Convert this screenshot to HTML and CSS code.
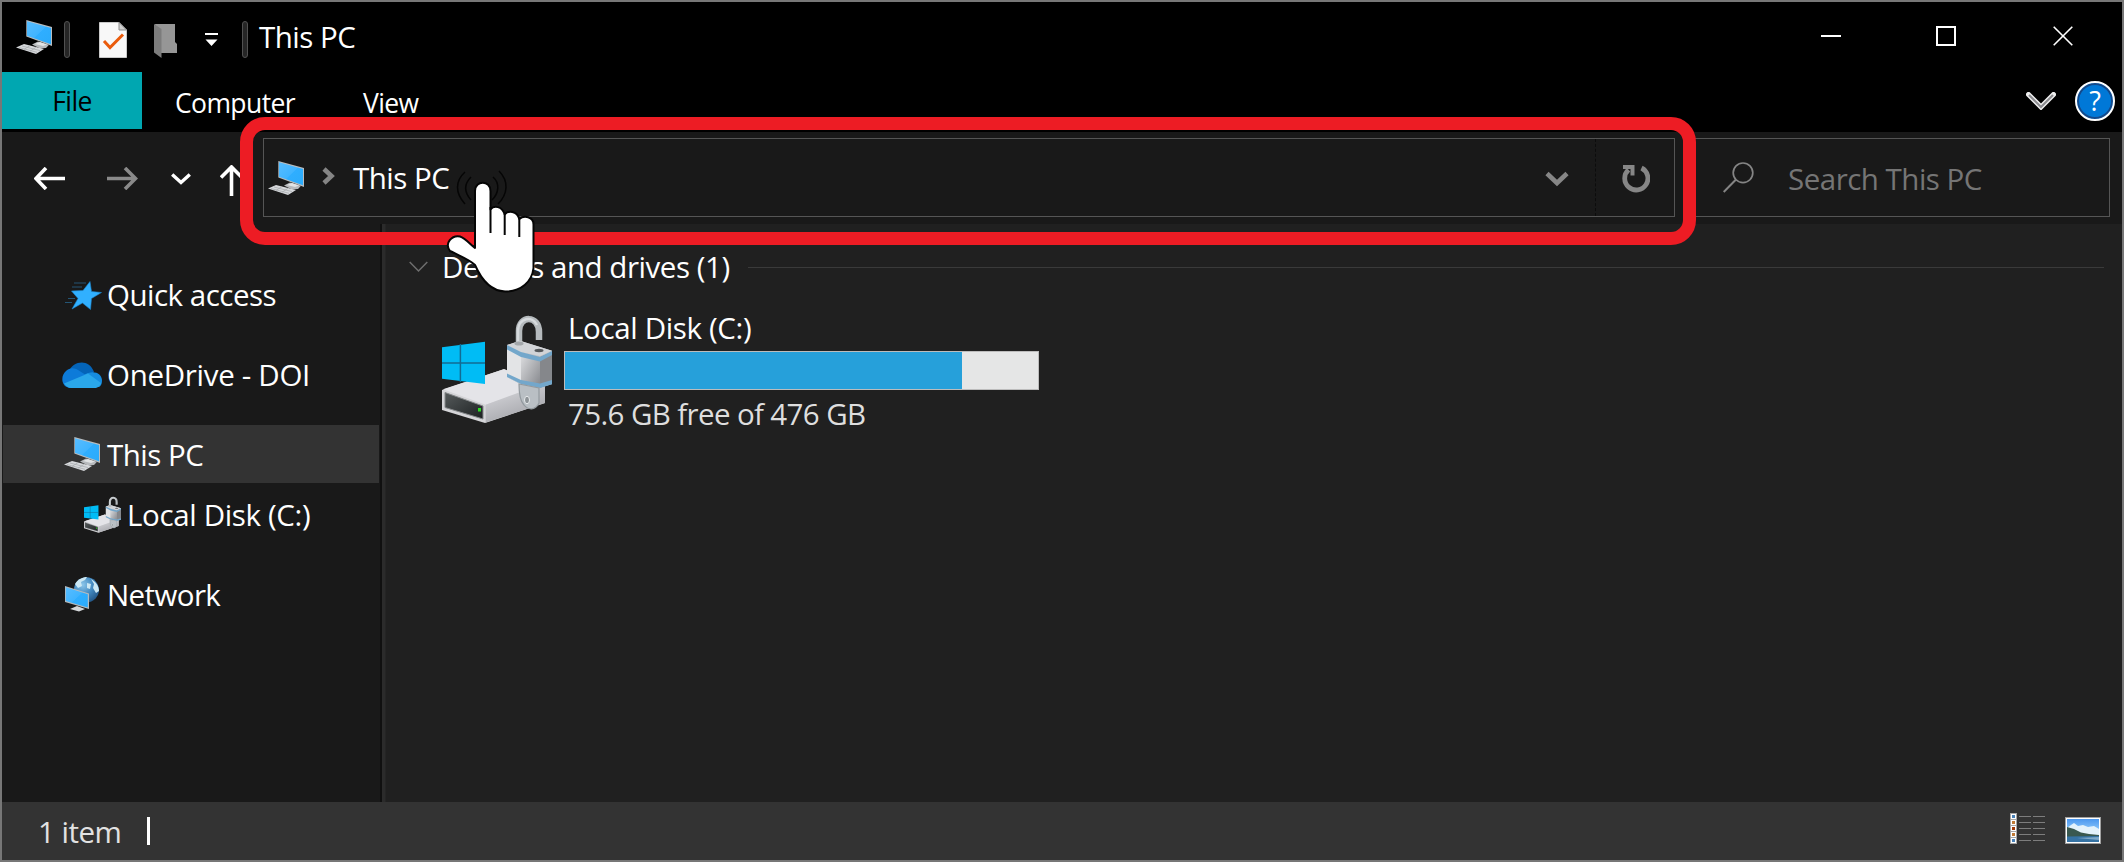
FILE: index.html
```html
<!DOCTYPE html>
<html lang="en">
<head>
<meta charset="utf-8">
<title>This PC</title>
<link rel="stylesheet" href="styles.css">
</head>
<body>
<svg class="defs" aria-hidden="true">
  <defs>
    <linearGradient id="screen" x1="0" y1="0" x2="1" y2="1"><stop offset="0" stop-color="#58bdff"/><stop offset=".5" stop-color="#40b4ff"/><stop offset=".52" stop-color="#2faeff"/><stop offset="1" stop-color="#2babfb"/></linearGradient>
    <linearGradient id="side" x1="0" y1="0" x2=".5" y2="1"><stop offset="0" stop-color="#e0e0e4"/><stop offset="1" stop-color="#a4a5aa"/></linearGradient>
    <linearGradient id="metal" x1="0" y1="0" x2="1" y2="1"><stop offset="0" stop-color="#dfe0e2"/><stop offset="1" stop-color="#85878c"/></linearGradient>
    <linearGradient id="bay" x1="0" y1="0" x2="1" y2="1"><stop offset="0" stop-color="#555a5b"/><stop offset="1" stop-color="#1d2122"/></linearGradient>
    <linearGradient id="sky" x1="0" y1="0" x2="0" y2="1"><stop offset="0" stop-color="#4b97ef"/><stop offset=".5" stop-color="#8dc8fb"/></linearGradient>
    <radialGradient id="globe" cx=".35" cy=".3" r=".8"><stop offset="0" stop-color="#8cc6ea"/><stop offset=".5" stop-color="#4389c0"/><stop offset="1" stop-color="#1d4f7e"/></radialGradient>
    <symbol id="pc" viewBox="0 0 36 34">
      <path d="M10.3 0 36 7v19L10.3 16.500z" fill="#b9bcbe"/>
      <path d="M11 1.300 35 7.900v16.400L11 15.700z" fill="url(#screen)"/>
      <path d="M16 24.500 22 21.500 33 24.800 30 28 24 28.500z" fill="#b7babd"/>
      <path d="M19 24 24 22 31 24.500 27 26z" fill="#e2e4e5"/>
      <path d="M0 27.500 8 24 28 29 20 34z" fill="#d7d9dc"/>
      <path d="M3 27.500 21 32.300M6 26 24 30.600M8 29.500l6-4M14 31.300l6-4" stroke="#a4a7aa" stroke-width=".7" fill="none"/>
    </symbol>
    <symbol id="drive" viewBox="0 0 110 108">
      <path d="M0 75 62 54 103 71v17L43 108 0 95z" fill="#d5d5d8"/>
      <path d="M1 74.300 62 54.300 103 71 43.700 89.700z" fill="#e4e4e8"/>
      <path d="M43.700 89.700 103 68v20L43.700 107.600z" fill="url(#side)"/>
      <path d="M3 77.500 41 91v13L3 92.500z" fill="url(#bay)" stroke="#85888a"/>
      <path d="M36 93h3v3.500h-3z" fill="#2bdc22"/>
      <path d="M0 32.300 43 26.700V69L0 63.700z" fill="#00bcf5"/>
      <path d="M18.400 29v38M0 48h43" stroke="#126b93" stroke-width="1.500"/>
      <path d="M77 30V16C77 0 97 0 97 17v8" fill="none" stroke="#b5babd" stroke-width="6.500"/>
      <path d="M76 28V15C77 3 90 0 95 10" fill="none" stroke="#d6dadd" stroke-width="2.500"/>
      <path d="M65 30 78 25.700 110 35.700V69L98 72.700 78 69 65 62z" fill="#c0c2c5"/>
      <path d="M65 30 78 25.700 110 35.700 98 41 79 37z" fill="#d2d4d7"/>
      <path d="M65 30 79 37v32L65 62z" fill="#e3e4e6"/>
      <path d="M79 37 98 42v30L79 69z" fill="url(#metal)"/>
      <path d="M98 42l12-5v32l-12 3.700z" fill="#85878b"/>
      <path d="M65 30 79 37 98 42 110 36v4L98 46.500 79 42 65 34.500zM65 58.500 79 65 98 68.500 110 65v4.300l-12 3.700-19-4-14-7z" fill="#73a7cb"/>
      <ellipse cx="97" cy="35.500" rx="4.500" ry="1.700" fill="#55585b"/>
      <ellipse cx="77" cy="28.500" rx="4.500" ry="2" fill="#a3a7aa"/>
      <path d="M77 69 97 73v15c-4 8-11 7-15 2-4-4-5-10-5-21z" fill="#b9bfc4" stroke="#92999e" stroke-width="1.200"/>
      <ellipse cx="85" cy="85" rx="2.500" ry="3.700" fill="#8e9498" stroke="#e7eaec"/>
    </symbol>
  </defs>
</svg>

<div class="window">
  <header class="titlebar">
    <svg class="title-pc" width="36" height="34"><use href="#pc"/></svg>
    <span class="grip"></span>
    <svg class="doc" width="28" height="36" viewBox="0 0 28 36">
      <path d="M.5.500H20l7.500 7.500v27.500H.5z" fill="#f8f8f8" stroke="#c9c9c9"/>
      <path d="M20 .500v7.500h7.500z" fill="#d0d0d0" stroke="#8d8d8d"/>
      <path d="M5 19 11 25.500 24 12.500" fill="none" stroke="#ea5b0c" stroke-width="3"/>
    </svg>
    <svg class="folder" width="24" height="34" viewBox="0 0 24 34">
      <path d="M1 0h20v18l2 2v9H6z" fill="#969696"/><path d="M0 0 7.500 5v29L0 28.500z" fill="#7c7c7c"/>
    </svg>
    <svg class="customize" width="13" height="14" viewBox="0 0 13 14"><path d="M0 0h13v2H0zM.5 6.500h12L6.500 13z" fill="#fff"/></svg>
    <span class="grip"></span>
    <h1 class="title">This PC</h1>
    <div class="controls">
      <svg width="20" height="20" viewBox="0 0 20 20"><path d="M0 10h20" stroke="#fff" stroke-width="2"/></svg>
      <svg width="20" height="20" viewBox="0 0 20 20"><path d="M1 1h18v18H1z" fill="none" stroke="#fff" stroke-width="2"/></svg>
      <svg width="20" height="20" viewBox="0 0 20 20"><path d="M.7.700 19.300 19.300M19.300.700.7 19.300" stroke="#fff" stroke-width="1.600"/></svg>
    </div>
  </header>

  <nav class="ribbon">
    <span class="tab tab-file">File</span>
    <span class="tab tab-computer">Computer</span>
    <span class="tab tab-view">View</span>
    <svg class="expand" width="30" height="18" viewBox="0 0 30 18"><path d="M2.500 2.500 15 15 27.500 2.500" fill="none" stroke="#f0f0f0" stroke-width="5" stroke-linecap="round"/><path d="M3 3 15 15 27 3" fill="none" stroke="#8c8c90" stroke-width="2.200"/></svg>
    <span class="help">?</span>
  </nav>

  <div class="toolbar">
    <svg class="back" width="31" height="23" viewBox="0 0 31 23"><path d="M31 11.500H2M12 1 2 11.500 12 22" fill="none" stroke="#fff" stroke-width="3.600"/></svg>
    <svg class="forward" width="31" height="23" viewBox="0 0 31 23"><path d="M0 11.500H29M18 1 28.500 11.500 18 22" fill="none" stroke="#8a8a8a" stroke-width="3.600"/></svg>
    <svg class="recent" width="20" height="12" viewBox="0 0 20 12"><path d="M1.200 1.500 10 9.500 18.800 1.500" fill="none" stroke="#fff" stroke-width="3.400"/></svg>
    <svg class="up" width="23" height="31" viewBox="0 0 23 31"><path d="M11.500 31V2M1 12.500 11.500 2 22 12.500" fill="none" stroke="#fff" stroke-width="3.600"/></svg>
    <div class="address">
      <svg class="address-pc" width="36" height="34"><use href="#pc"/></svg>
      <svg class="crumb" width="13" height="18" viewBox="0 0 13 18"><path d="M2 2 9.500 9 2 16" fill="none" stroke="#858585" stroke-width="4.600"/></svg>
      <span class="path">This PC</span>
      <svg class="drop" width="24" height="16" viewBox="0 0 24 16"><path d="M2 2.500 12 12 22 2.500" fill="none" stroke="#868686" stroke-width="4.600"/></svg>
      <span class="divider"></span>
      <svg class="refresh" width="28" height="29" viewBox="0 0 28 29"><path d="M6.500 5.800A11.600 11.600 0 1 0 19.500 4" fill="none" stroke="#868686" stroke-width="4.800"/><path d="M1 1h11.500v10.500h-4V5H1z" fill="#868686"/></svg>
    </div>
    <div class="search">
      <svg class="lens" width="31" height="31" viewBox="0 0 31 31"><path d="M.7 30 13 17.500" stroke="#858585" stroke-width="2"/><circle cx="20" cy="10.800" r="9.800" fill="none" stroke="#858585" stroke-width="1.700"/></svg>
      <span class="hint">Search This PC</span>
    </div>
  </div>

  <div class="main">
    <aside class="sidebar">
      <div class="item quick">
        <svg width="37" height="29" viewBox="0 0 37 29"><path d="M9 2h12M7 6h10M3 17.500h7M0 21.500h7" stroke="#245574" stroke-width="1"/><path d="M25 .500 26.500 10.500 36.500 11.500 26.500 17.500 25.500 28.500 17.500 22 7 28 13 17.500 6.500 10 18 9.500z" fill="#31b0ff" stroke="#1d86cf" stroke-width=".6"/></svg>
        <span>Quick access</span>
      </div>
      <div class="item onedrive">
        <svg width="40" height="26" viewBox="0 0 40 26"><path d="M7 9C11-1 27-4 32 10L22 18z" fill="#0464b8"/><path d="M9.500 26C-1 26-2 14 4 9c4-4 9-3 12-1l11 7-12 11z" fill="#0d7bd9"/><path d="M22 13c8-5 18-3 18 6 0 2-1 5-3 6L25 22z" fill="#168cdf"/><path d="M2 21.500 26 11.500 39 21c-1 3-3 5-7 5H9.500c-3 0-6-2-7.500-4.500z" fill="#2aa7ea"/></svg>
        <span>OneDrive - DOI</span>
      </div>
      <div class="item this-pc">
        <svg width="36" height="34"><use href="#pc"/></svg>
        <span>This PC</span>
      </div>
      <div class="item disk">
        <svg width="37" height="37"><use href="#drive"/></svg>
        <span>Local Disk (C:)</span>
      </div>
      <div class="item network">
        <svg width="34" height="35" viewBox="0 0 34 35"><circle cx="21.500" cy="12.800" r="12.600" fill="url(#globe)"/><path d="M10 7c3-5 8-7 12-7l-2 3-4 2 1 4-4 2zM26 2c5 3 8 7 8 12l-3 2-3-5 1-4zM22 6l4 1-1 5-3-1z" fill="#cce8f4"/><path d="M0 9 24 16.500V32L0 25z" fill="#b6babd"/><path d="M.8 10.300 22.800 17.200v13.300L.8 24z" fill="url(#screen)"/><path d="M5 32 12 29 20 32 14 34.500z" fill="#d5d8da"/></svg>
        <span>Network</span>
      </div>
    </aside>
    <div class="splitter"></div>
    <section class="content">
      <div class="group">
        <svg width="19" height="12" viewBox="0 0 19 12"><path d="M.7 1 9.500 10 18.300 1" fill="none" stroke="#6e6e6e" stroke-width="1.500"/></svg>
        <span class="group-name">Devices and drives (1)</span>
        <span class="rule"></span>
      </div>
      <div class="volume">
        <svg width="110" height="108"><use href="#drive"/></svg>
        <div class="details">
          <span class="volume-name">Local Disk (C:)</span>
          <div class="meter"><div class="used" style="width:84%"></div></div>
          <span class="free">75.6 GB free of 476 GB</span>
        </div>
      </div>
    </section>
  </div>

  <footer class="status">
    <span class="count">1 item</span>
    <span class="caret"></span>
    <svg class="view-details" width="36" height="31" viewBox="0 0 36 31">
      <path d="M0 0h7v31H0z" fill="#a6a6a6"/>
      <path d="M1 1h5v5H1zM1 7h5v5H1zM1 13h5v5H1zM1 19h5v5H1zM1 25h5v5H1z" fill="#fff"/>
      <path d="M2 2h3v3H2zM2 26h3v3H2z" fill="#4a82b8"/><path d="M2 8h3v3H2zM2 20h3v3H2z" fill="#c07a35"/><path d="M2 14h3v3H2z" fill="#a33a08"/>
      <path d="M9 3.500h12M23 3.500h12M9 9.500h12M23 9.500h12M9 15.500h12M23 15.500h12M9 21.500h12M23 21.500h12M9 27.500h12M23 27.500h12" stroke="#7d7d7d"/>
    </svg>
    <svg class="view-large" width="36" height="27" viewBox="0 0 36 27">
      <path d="M0 0h36v27H0z" fill="#a0a0a0"/><path d="M1 1h34v25H1z" fill="#fff"/><path d="M2 2h32v23H2z" fill="url(#sky)"/>
      <path d="M2 11 6 8 9 6 13 9 18 8 23 10 29 9 34 12v7H2z" fill="#e4f2fb"/>
      <path d="M2 10 9 12 16 15.500 24 17 34 18V20H2z" fill="#39584f"/><path d="M2 19.500 34 19v6H2z" fill="#3673a4"/><path d="M12 21 34 20v3z" fill="#80aac9"/>
    </svg>
  </footer>
</div>

<div class="highlight"></div>
<svg class="pointer" width="90" height="126" viewBox="0 0 90 126">
  <path d="M19 3C9 12 9 24 19 35M25 8C18 15 18 23 25 31M53 2C63 12 62 25 52 35M47 8C54 14 53 24 46 31" fill="none" stroke="#050505" stroke-width="1.500"/>
  <path d="M29 79V22C29 11 44.500 11 44.500 22V40.500C48 36 56 37 58.700 45.500C62 41 71 42 73.300 50C78 46 87.500 47.500 87.500 55.500V99C86 113 75 122.500 59 122.500C46 122 36 112 29 96C24 91 12 86 4 82C-2 74 6 66 14 67.500C19 69 24 75 29 79Z" fill="#fff" stroke="#050505" stroke-width="2" stroke-linejoin="round"/>
  <path d="M44.500 38V64M58.700 45V66M73.300 49V68" fill="none" stroke="#050505" stroke-width="2"/>
</svg>
</body>
</html>
```

FILE: styles.css
```css
* { box-sizing: border-box; }
body {
  margin: 0;
  width: 2124px;
  height: 862px;
  overflow: hidden;
  position: relative;
  background: #191919;
  color: #fff;
  font-family: "Open Sans", "Noto Sans", sans-serif;
  font-size: 29.5px;
  line-height: 40px;
  white-space: nowrap;
}
svg { display: block; flex: none; }
.defs { position: absolute; width: 0; height: 0; }
.window {
  width: 2124px;
  height: 862px;
  border: 2px solid #777;
  display: flex;
  flex-direction: column;
}

.titlebar { height: 70px; background: #000; display: flex; align-items: flex-start; padding: 18px 49px 0 14px; }
.grip { width: 6px; height: 37px; margin: 1px 0 0 12px; border: 1px solid #515151; border-radius: 3px; background: #262626; flex: none; }
.doc { margin: 2px 0 0 29px; }
.folder { margin: 4px 0 0 27px; }
.customize { margin: 13px 0 0 27px; }
.customize + .grip { margin-left: 24px; }
.title { margin: -3px 0 0 11px; font-size: 29.5px; font-weight: 400; letter-spacing: -.5px; }
.controls { margin: 6px 0 0 auto; display: flex; gap: 95px; }
.controls svg:last-child { margin-left: 2px; }

.ribbon { height: 60px; background: #000; display: flex; align-items: flex-start; font-size: 26.5px; letter-spacing: -.6px; padding-right: 7px; }
.tab { line-height: 59px; height: 57px; }
.tab-file { width: 140px; text-align: center; background: #00a7b1; color: #000; }
.tab-computer { margin-left: 33px; line-height: 62px; }
.tab-view { margin-left: 68px; line-height: 62px; }
.expand { margin: 20px 0 0 auto; }
.help {
  margin: 9px 0 0 19px;
  width: 40px;
  height: 40px;
  border-radius: 50%;
  border: 2px solid #fff;
  background: #0078d7;
  box-shadow: inset 0 0 0 2px #14498a;
  text-align: center;
  line-height: 36px;
  font-size: 27px;
  letter-spacing: 0;
}

.toolbar { height: 92px; background: #191919; display: flex; align-items: flex-start; }
.back { margin: 35px 0 0 32px; }
.forward { margin: 35px 0 0 42px; }
.recent { margin: 41px 0 0 33px; }
.up { margin: 33px 0 0 29px; }
.address, .search { height: 79px; margin-top: 6px; border: 1px solid #555; display: flex; align-items: flex-start; }
.address { width: 1412px; margin-left: 20px; }
.address-pc { margin: 22px 0 0 4px; }
.crumb { margin: 28px 0 0 18px; }
.path { margin: 19px 0 0 18px; letter-spacing: -.5px; }
.drop { margin: 32px 0 0 auto; }
.divider { margin-left: 26px; width: 1px; height: 77px; border-left: 1px dashed #0c0c0c; }
.refresh { margin: 25px 24px 0 26px; }
.search { width: 423px; margin-left: 12px; color: #757575; }
.lens { margin: 23px 0 0 35px; }
.hint { margin: 20px 0 0 34px; letter-spacing: -.5px; }

.main { height: 578px; display: flex; }
.sidebar { width: 378px; padding: 42px 1px 0; background: #191919; display: flex; flex-direction: column; }
.item { height: 58px; margin-bottom: 22px; display: flex; align-items: center; letter-spacing: -.5px; }
.item svg { margin-left: 61px; margin-right: 7px; }
.item.quick svg { margin-left: 62px; margin-right: 5px; }
.item.onedrive svg { margin-left: 59px; margin-right: 5px; }
.item.onedrive { margin-bottom: 21px; letter-spacing: -.3px; }
.item.this-pc { background: #333; margin-bottom: 2px; }
.item.this-pc span, .item.disk span, .item.network span { padding-top: 2px; }
.item.disk { letter-spacing: -.35px; }
.item.disk svg { margin-left: 81px; margin-right: 6px; }
.item.network { letter-spacing: -.6px; }
.item.network svg { margin-left: 62px; margin-right: 8px; }
.splitter { width: 6px; background: #2b2b2b; border-left: 2px solid #101010; border-right: 1px solid #252525; }
.content { flex: 1; background: #202020; padding: 23px 18px 0 23px; }
.group { display: flex; align-items: center; height: 40px; }
.group-name { margin-left: 14px; letter-spacing: -.45px; }
.rule { flex: 1; height: 1px; margin-left: 18px; background: #3a3a3a; }
.volume { display: flex; margin: 28px 0 0 33px; }
.details { margin-left: 12px; width: 475px; display: flex; flex-direction: column; }
.volume-name, .free { margin-left: 4px; letter-spacing: -.35px; }
.volume-name { margin-top: -7px; }
.meter { height: 39px; margin-top: 3px; border: 1px solid #bcbcbc; background: #e5e6e6; }
.used { height: 100%; background: #26a0da; }
.free { margin-top: 4px; color: #dedede; letter-spacing: -.62px; }

.status { height: 58px; background: #333; display: flex; align-items: flex-start; padding: 0 21px 0 36px; }
.count { color: #e2e2e2; margin-top: 10px; letter-spacing: -.5px; }
.caret { margin: 15px 0 0 26px; width: 3px; height: 28px; background: #fff; }
.view-details { margin: 11px 0 0 auto; }
.view-large { margin: 15px 0 0 19px; }

/* Callout overlay and hand cursor */
.highlight { position: absolute; left: 240px; top: 117px; width: 1456px; height: 128px; border: 13px solid #ed1c24; border-radius: 25px; }
.pointer { position: absolute; left: 446px; top: 169px; }
```
